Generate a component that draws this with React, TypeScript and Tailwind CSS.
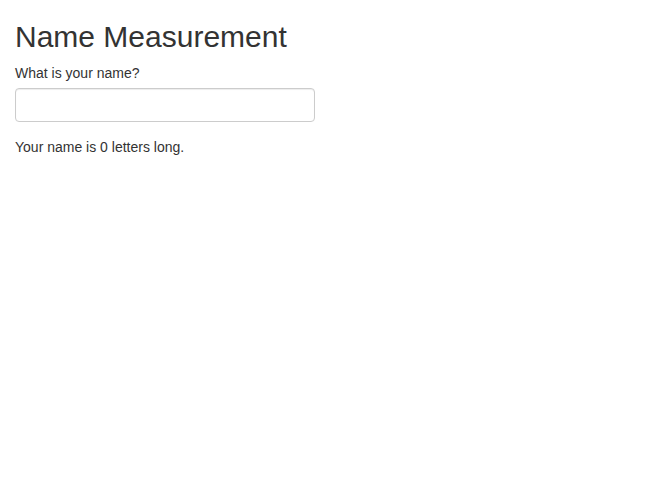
import React, { useState } from "react";

export default function App() {
  const [name, setName] = useState("");
  return (
    <div
      className="px-[15px] text-[14px] leading-[20px] text-[#333333] bg-white min-h-[480px]"
      style={{ fontFamily: '"Liberation Sans", Arial, Helvetica, sans-serif' }}
    >
      <h2 className="mt-[20px] mb-[10px] text-[30px] leading-[33px] font-medium">Name Measurement</h2>
      <div className="w-[300px] mb-[15px]">
        <label htmlFor="name" className="block mb-[5px]">What is your name?</label>
        <input
          id="name"
          type="text"
          value={name}
          onChange={(e) => setName(e.target.value)}
          className="block w-full h-[34px] px-[12px] py-[6px] border border-[#cccccc] rounded-[4px] shadow-[inset_0_1px_1px_rgba(0,0,0,0.075)] text-[14px] text-[#555555] outline-none"
        />
      </div>
      <div>Your name is {name.length} letters long.</div>
    </div>
  );
}
